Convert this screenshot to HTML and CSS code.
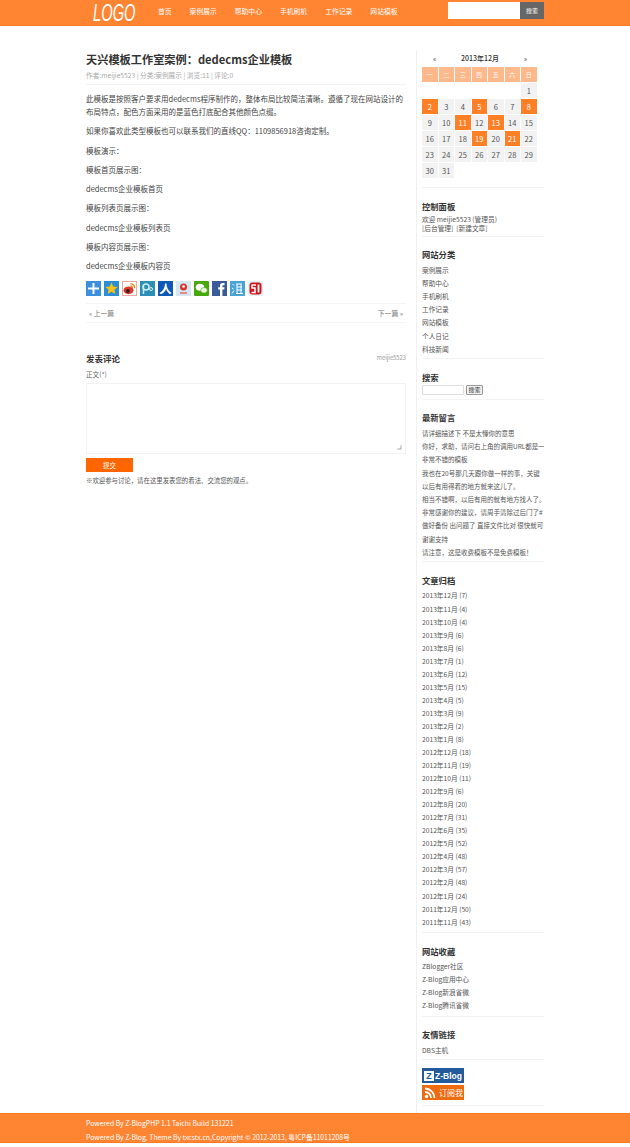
FILE: index.html
```html
<!DOCTYPE html>
<html lang="zh-CN">
<head>
  <meta charset="UTF-8" />
  <title>天兴模板工作室案例：dedecms企业模板</title>
  <link rel="stylesheet" href="styles.css">
</head>
<body>

  <div class="header">
    <div class="wrap header-in">
      <div class="logo-box"><a class="logo">LOGO</a></div>
      <ul class="nav">
        <li>首页</li>
        <li>案例展示</li>
        <li>帮助中心</li>
        <li>手机刷机</li>
        <li>工作记录</li>
        <li>网站模板</li>
      </ul>
      <div class="top-search">
        <div class="top-input"></div>
        <div class="top-btn">搜索</div>
      </div>
    </div>
  </div>

  <div class="wrap page">
    <div class="main">
      <h1>天兴模板工作室案例：dedecms企业模板</h1>
      <div class="meta">作者:meijie5523 | 分类:案例展示 | 浏览:11 | 评论:0</div>

      <div class="post">
        <p>此模板是按照客户要求用dedecms程序制作的，整体布局比较简洁清晰。遵循了现在网站设计的布局特点，配色方面采用的是蓝色打底配合其他颜色点缀。</p>
        <p>如果你喜欢此类型模板也可以联系我们的直线QQ：1109856918咨询定制。</p>
        <p>模板演示：</p>
        <p>模板首页展示图：</p>
        <p>dedecms企业模板首页</p>
        <p>模板列表页展示图：</p>
        <p>dedecms企业模板列表页</p>
        <p>模板内容页展示图：</p>
        <p>dedecms企业模板内容页</p>
      </div>

      <div class="share">
        <svg viewBox="0 0 15 15"><rect width="15" height="15" fill="#3b8fdc"/><path d="M2 6.500h11v2H2zM6.500 2h2v11h-2z" fill="#fff"/></svg>
        <svg viewBox="0 0 15 15"><rect width="15" height="15" fill="#2a8ed6"/><path d="M7.500 1.500l1.800 4 4.400.4-3.300 2.900 1 4.300-3.900-2.300-3.900 2.300 1-4.300L1.300 5.900l4.400-.4z" fill="#f7c117"/></svg>
        <svg viewBox="0 0 15 15"><rect x=".5" y=".5" width="14" height="14" fill="#fff" stroke="#eba9a0"/><ellipse cx="6.500" cy="9.300" rx="5" ry="3.900" fill="#e0352b"/><circle cx="5.800" cy="10" r="1.900" fill="#222"/><path d="M8.500 2.800a4 4 0 0 1 4.200 4.200M8.500 5a2 2 0 0 1 2 2" fill="none" stroke="#ee8a1d" stroke-width="1.300"/></svg>
        <svg viewBox="0 0 15 15"><rect width="15" height="15" fill="#2c8fb5"/><circle cx="6" cy="6" r="3" fill="none" stroke="#cfeefa" stroke-width="1.500"/><path d="M3.500 5v8" stroke="#cfeefa" stroke-width="1.500"/><circle cx="11" cy="8" r="1.500" fill="none" stroke="#cfeefa"/></svg>
        <svg viewBox="0 0 15 15"><rect width="15" height="15" fill="#0f58b5"/><path d="M7 2.500h1.500c0 4 1.500 7 5 9.500l-1.500 1.200c-2-1.500-3.200-3.300-3.900-5.200C7.400 10.300 5.500 12 3 13.200L1.500 12C5 10 7 7 7 2.500z" fill="#fff"/></svg>
        <svg viewBox="0 0 15 15"><rect width="15" height="15" fill="#d5e8f2"/><circle cx="7.500" cy="6" r="3.500" fill="#d9352f"/><circle cx="7.500" cy="5.500" r="1.300" fill="#fff"/><path d="M4 11h7v2H4z" fill="#e88a8a"/></svg>
        <svg viewBox="0 0 15 15"><rect width="15" height="15" rx="1" fill="#46a80d"/><ellipse cx="6" cy="6.300" rx="4.200" ry="3.500" fill="#fff"/><ellipse cx="10" cy="9.300" rx="3.300" ry="2.800" fill="#e9f6dd" stroke="#46a80d" stroke-width=".6"/></svg>
        <svg viewBox="0 0 15 15"><rect width="15" height="15" fill="#3b5a9a"/><path d="M8 15V8.500H6.200V6.300H8V4.800C8 3 9 2 10.700 2H12.500v2.200h-1.100c-.8 0-1 .4-1 1v1.100h2.100l-.3 2.200h-1.800V15z" fill="#fff"/></svg>
        <svg viewBox="0 0 15 15"><rect width="15" height="15" fill="#4aa3d8"/><path d="M6 3h6M7 6h5M7 9h5M6 12.500h7M7 3v9.500M11 3v9.500M2.500 3l1.500 1.500M2 7l1.500 1M2 12.500l2-3" fill="none" stroke="#fff" stroke-width="1"/></svg>
        <svg viewBox="0 0 15 15"><rect width="15" height="15" rx="2" fill="#e4eef5"/><rect x="1.500" y="1.500" width="12" height="12" rx="3" fill="#d3141a"/><path d="M3.500 4H8M4 4v3h3v4.500H3.500" fill="none" stroke="#fff" stroke-width="1.500"/><path d="M10.500 3.500v8" stroke="#fff" stroke-width="1.800"/></svg>
      </div>

      <div class="prevnext">
        <span>« 上一篇</span>
        <span>下一篇 »</span>
      </div>

      <div class="comment-head">
        <h3>发表评论</h3>
        <span class="comment-user">meijie5523</span>
      </div>
      <div class="comment-label">正文(*)</div>
      <div class="comment-box">
        <svg class="grip" viewBox="0 0 6 6"><path d="M5 1v4H1M5 3v2H3" fill="none" stroke="#bbb" stroke-width="1"/></svg>
      </div>
      <div class="comment-submit">提交</div>
      <div class="comment-tip">※欢迎参与讨论，请在这里发表您的看法、交流您的观点。</div>
    </div>

    <div class="side">
      <div class="widget calendar">
        <div class="cal-head"><span>«</span><b>2013年12月</b><span>»</span></div>
        <div class="cal-grid">
          <div class="wk">一</div><div class="wk">二</div><div class="wk">三</div><div class="wk">四</div><div class="wk">五</div><div class="wk">六</div><div class="wk">日</div>
          <i></i><i></i><i></i><i></i><i></i><i></i><div>1</div>
          <div class="on">2</div><div>3</div><div>4</div><div class="on">5</div><div>6</div><div>7</div><div class="on">8</div>
          <div>9</div><div>10</div><div class="on">11</div><div>12</div><div class="on">13</div><div>14</div><div>15</div>
          <div>16</div><div>17</div><div>18</div><div class="on">19</div><div>20</div><div class="on">21</div><div>22</div>
          <div>23</div><div>24</div><div>25</div><div>26</div><div>27</div><div>28</div><div>29</div>
          <div>30</div><div>31</div>
        </div>
      </div>

      <div class="widget">
        <h4>控制面板</h4>
        <div class="panel">欢迎 meijie5523 (管理员)<br>[后台管理]&nbsp; [新建文章]</div>
      </div>

      <div class="widget">
        <h4>网站分类</h4>
        <ul class="list list-wide">
          <li>案例展示</li>
          <li>帮助中心</li>
          <li>手机刷机</li>
          <li>工作记录</li>
          <li>网站模板</li>
          <li>个人日记</li>
          <li>科技新闻</li>
        </ul>
      </div>

      <div class="widget">
        <h4>搜索</h4>
        <div class="side-search">
          <div class="side-input"></div>
          <div class="side-btn">搜索</div>
        </div>
      </div>

      <div class="widget">
        <h4>最新留言</h4>
        <ul class="list list-wide list-msg">
          <li>请详细描述下 不是太懂你的意思</li>
          <li>你好，求助，请问右上角的调用URL都是一</li>
          <li>非常不错的模板</li>
          <li>我也在20号那几天跟你做一样的事，关键</li>
          <li>以后有用得着的地方就来这儿了。</li>
          <li>相当不错啊，以后有用的就有地方找人了。</li>
          <li>非常感谢你的建议，请周手清除过后门了#</li>
          <li>做好备份 出问题了 直接文件比对 很快就可</li>
          <li>谢谢支持</li>
          <li>请注意，这是收费模板不是免费模板！</li>
        </ul>
      </div>

      <div class="widget">
        <h4>文章归档</h4>
        <ul class="list list-archive">
          <li>2013年12月 (7)</li>
          <li>2013年11月 (4)</li>
          <li>2013年10月 (4)</li>
          <li>2013年9月 (6)</li>
          <li>2013年8月 (6)</li>
          <li>2013年7月 (1)</li>
          <li>2013年6月 (12)</li>
          <li>2013年5月 (15)</li>
          <li>2013年4月 (5)</li>
          <li>2013年3月 (9)</li>
          <li>2013年2月 (2)</li>
          <li>2013年1月 (8)</li>
          <li>2012年12月 (18)</li>
          <li>2012年11月 (19)</li>
          <li>2012年10月 (11)</li>
          <li>2012年9月 (6)</li>
          <li>2012年8月 (20)</li>
          <li>2012年7月 (31)</li>
          <li>2012年6月 (35)</li>
          <li>2012年5月 (52)</li>
          <li>2012年4月 (48)</li>
          <li>2012年3月 (57)</li>
          <li>2012年2月 (48)</li>
          <li>2012年1月 (24)</li>
          <li>2011年12月 (50)</li>
          <li>2011年11月 (43)</li>
        </ul>
      </div>

      <div class="widget">
        <h4>网站收藏</h4>
        <ul class="list list-fav">
          <li>ZBlogger社区</li>
          <li>Z-Blog应用中心</li>
          <li>Z-Blog新浪省微</li>
          <li>Z-Blog腾讯省微</li>
        </ul>
      </div>

      <div class="widget">
        <h4>友情链接</h4>
        <ul class="list">
          <li>DBS主机</li>
        </ul>
      </div>

      <div class="widget badges">
        <div class="badge-zblog">
          <span class="z-mark">Z</span><span class="z-text">Z-Blog</span>
        </div>
        <div class="badge-rss">
          <svg viewBox="0 0 12 12"><circle cx="2.500" cy="9.500" r="1.700" fill="#fff"/><path d="M1 5a6 6 0 0 1 6 6M1 1.500a9.500 9.500 0 0 1 9.500 9.500" fill="none" stroke="#fff" stroke-width="1.800"/></svg>
          <span>订阅我</span>
        </div>
      </div>
    </div>
  </div>

  <div class="footer">
    <div class="wrap">
      <div>Powered By Z-BlogPHP 1.1 Taichi Build 131221</div>
      <div>Powered By Z-Blog, Theme By txcstx.cn,Copyright © 2012-2013, 粤ICP备11011208号</div>
    </div>
  </div>

</body>
</html>
```

FILE: styles.css
```css
* { box-sizing: border-box; margin: 0; padding: 0; }
body {
  font-family: "Noto Sans CJK SC", "Open Sans", sans-serif;
  font-size: 8px;
  background: #fff;
  color: #555;
}
ul { list-style: none; }
.wrap {
  width: 458px;
  margin-left: 86px;
}

/* header */
.header {
  height: 26px;
  background: #ff8533;
  border-bottom: 1px solid #ff7a22;
}
.header-in {
  display: flex;
  align-items: center;
  height: 25px;
}
.logo-box {
  width: 72px;
  padding-left: 7px;
  margin-top: 1px;
  height: 25px;
}
.logo {
  display: block;
  width: 67px;
  font-family: "Liberation Sans", sans-serif;
  font-size: 23px;
  font-style: italic;
  color: #fff;
  line-height: 25px;
  transform: scaleX(0.64);
  transform-origin: left center;
}
.nav {
  display: flex;
  gap: 18px;
  font-size: 6.8px;
  color: #fff;
  margin-top: -3px;
}
.top-search {
  display: flex;
  margin-left: auto;
  margin-top: -4px;
  height: 17px;
}
.top-input {
  width: 72px;
  background: #fff;
}
.top-btn {
  width: 24px;
  background: #666;
  color: #fff;
  font-size: 6px;
  line-height: 17px;
  text-align: center;
}

/* layout */
.page {
  display: flex;
  margin-top: 24px;
}
.main {
  width: 321px;
}
.side {
  width: 128px;
  margin-left: 10px;
  padding-left: 5px;
  border-left: 1px solid #f0f0f0;
  height: 1063px;
}

/* post */
h1 {
  font-size: 11.2px;
  line-height: 18px;
  color: #333;
}
.meta {
  color: #aaa;
  font-size: 6.7px;
  line-height: 12px;
  margin-top: 1px;
  padding-bottom: 3px;
  border-bottom: 1px solid #f3f3f3;
}
.post {
  padding-top: 7px;
  font-size: 7.5px;
  line-height: 13px;
  color: #444;
}
.post p {
  margin-bottom: 6.3px;
}
.share {
  display: flex;
  gap: 3px;
  margin-top: 8.6px;
}
.share svg {
  width: 15px;
  height: 15px;
}
.prevnext {
  display: flex;
  justify-content: space-between;
  margin-top: 7px;
  padding: 0 3px;
  height: 20px;
  line-height: 18px;
  font-size: 6.8px;
  color: #777;
  border-top: 1px solid #f5f5f5;
  border-bottom: 1px solid #f5f5f5;
}

/* comment form */
.comment-head {
  display: flex;
  justify-content: space-between;
  align-items: center;
  margin-top: 28px;
  height: 14px;
}
.comment-head h3 {
  font-size: 8.500px;
  color: #333;
}
.comment-user {
  font-size: 5.800px;
  color: #999;
}
.comment-label {
  margin-top: 4px;
  font-size: 6.600px;
  line-height: 11px;
  color: #666;
}
.comment-box {
  position: relative;
  margin-top: 3px;
  height: 71px;
  border: 1px solid #f2f2f2;
}
.grip {
  position: absolute;
  right: 3px;
  bottom: 3px;
  width: 6px;
  height: 6px;
}
.comment-submit {
  margin-top: 4px;
  width: 47px;
  height: 14px;
  background: #ff6600;
  color: #fff;
  font-size: 6.500px;
  line-height: 14px;
  text-align: center;
}
.comment-tip {
  margin-top: 3px;
  font-size: 6.400px;
  line-height: 11px;
  color: #555;
}

/* sidebar */
.widget {
  width: 122px;
  padding: 11.500px 0 2.500px;
  border-bottom: 1.500px solid #f3f3f3;
}
h4 {
  font-size: 8.300px;
  line-height: 12px;
  color: #333;
}
.calendar {
  height: 138px;
  padding: 0;
}
.cal-head {
  display: flex;
  justify-content: space-between;
  width: 116px;
  padding: 0 11px;
  height: 17px;
  line-height: 17px;
  font-size: 7px;
  color: #444;
}
.cal-head b {
  font-weight: 500;
  color: #333;
}
.cal-grid {
  display: grid;
  grid-template-columns: repeat(7, 15.500px);
  grid-auto-rows: 15px;
  gap: 1px;
  font-size: 7.500px;
  text-align: center;
  line-height: 15px;
}
.cal-grid div {
  background: #f2f2f2;
  color: #555;
}
.cal-grid .wk {
  background: #ffb88a;
  color: #fff;
  font-size: 6px;
}
.cal-grid .on {
  background: #ff7f27;
  color: #fff;
}
.panel {
  margin-top: 3.500px;
  font-size: 6.700px;
  line-height: 9px;
  color: #555;
}
.list {
  margin-top: 3.500px;
  font-size: 6.700px;
  line-height: 13.050px;
  color: #555;
}
.list-wide {
  line-height: 13.200px;
}
.list-msg {
  font-size: 6.500px;
}
.list-archive {
  margin-bottom: 1px;
}
.list-fav {
  margin-bottom: 1px;
}
.list li {
  white-space: nowrap;
  overflow: hidden;
}
.side-search {
  display: flex;
  gap: 2px;
  margin-top: 2.500px;
  margin-bottom: 1px;
  height: 10px;
}
.side-input {
  width: 42px;
  border: 1px solid #ddd;
  border-radius: 1px;
}
.side-btn {
  width: 17px;
  background: #f0f0f0;
  border: 1px solid #999;
  border-radius: 1px;
  font-size: 6px;
  line-height: 8px;
  text-align: center;
  color: #333;
}
.badges {
  padding-top: 8px;
  padding-bottom: 4.500px;
}
.badge-zblog,
.badge-rss {
  display: flex;
  align-items: center;
  width: 42px;
  height: 15px;
  color: #fff;
}
.badge-zblog {
  background: #235a9b;
  padding-left: 2px;
  gap: 1px;
}
.z-mark {
  width: 10px;
  height: 10px;
  background: #fff;
  color: #235a9b;
  font-family: "Liberation Sans", sans-serif;
  font-size: 9px;
  font-weight: bold;
  line-height: 10px;
  text-align: center;
}
.z-text {
  font-family: "Liberation Sans", sans-serif;
  font-size: 8.500px;
  font-weight: bold;
}
.badge-rss {
  margin-top: 2px;
  background: #ee6c10;
  padding-left: 2px;
  gap: 3px;
  font-size: 8px;
}
.badge-rss svg {
  width: 12px;
  height: 12px;
}

/* footer */
.footer {
  height: 30px;
  background: #ff8533;
  border-top: 1px solid #ff7a22;
  border-bottom: 1px solid #ff7a22;
  padding-top: 2px;
  color: #fff;
  font-size: 6.850px;
  line-height: 14px;
}
```
